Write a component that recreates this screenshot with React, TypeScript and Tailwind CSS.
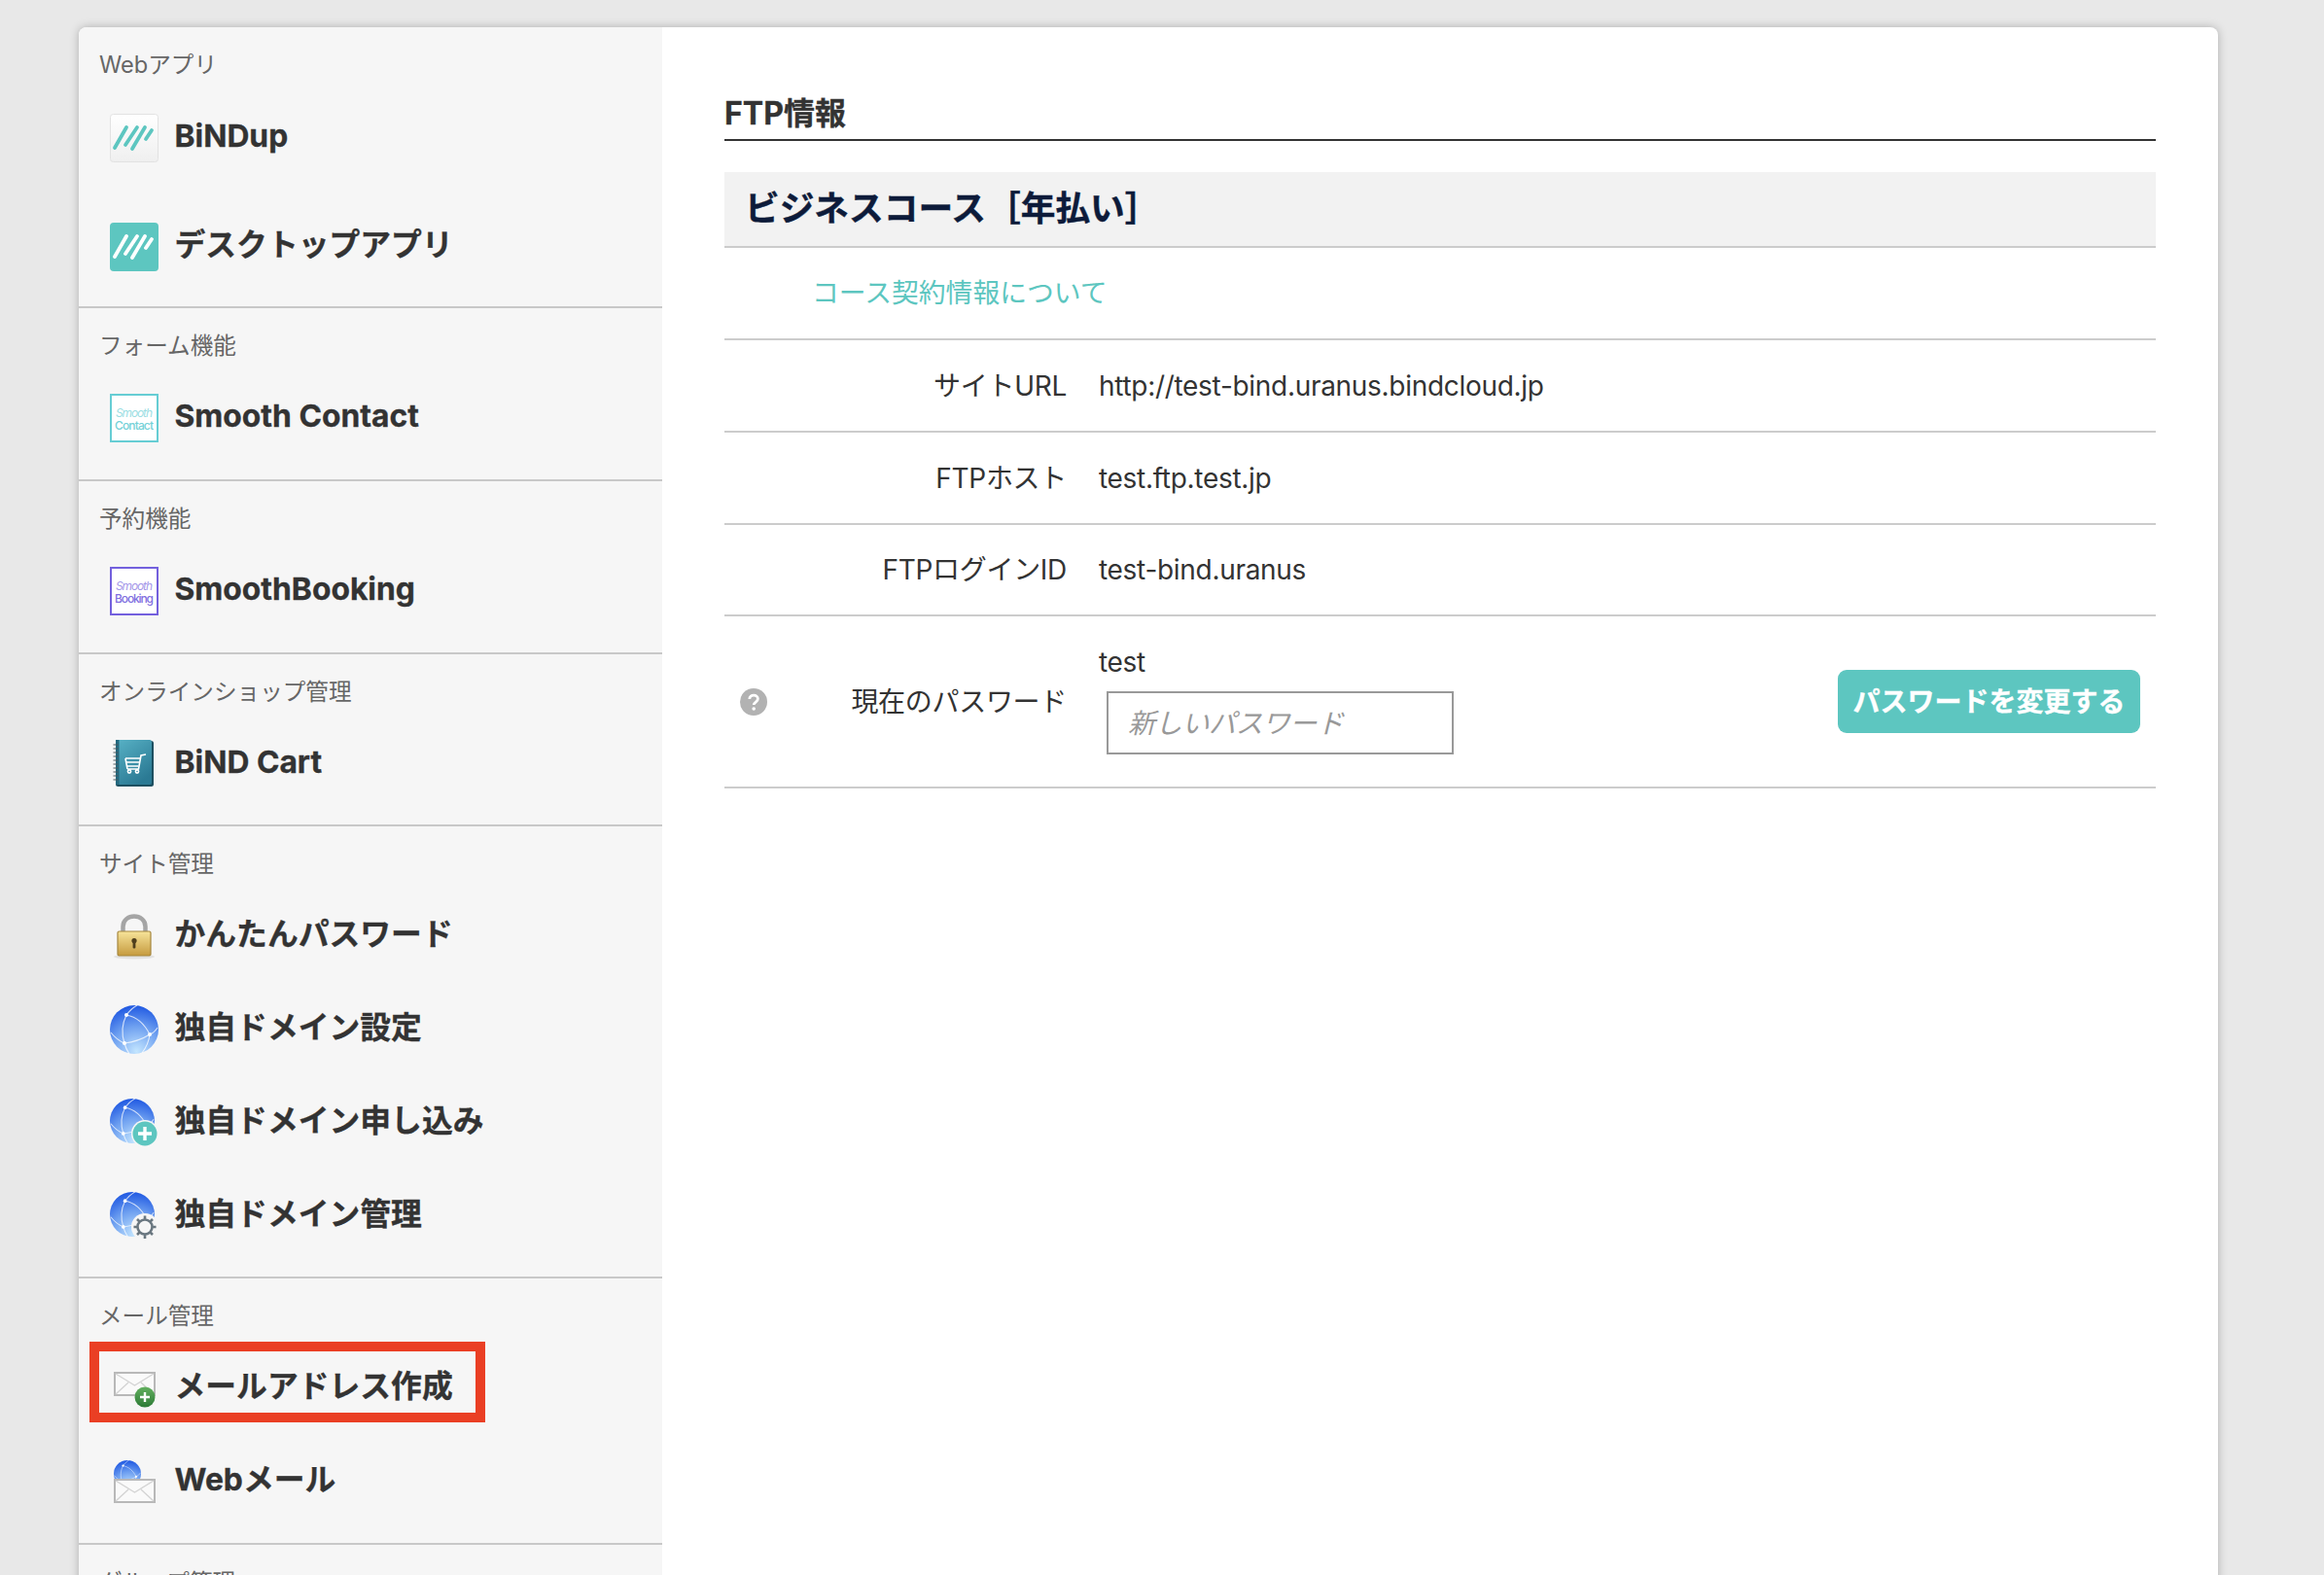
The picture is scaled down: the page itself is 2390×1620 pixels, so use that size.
import type { ReactNode } from "react";

function Stripes({ color }: { color: string }) {
  return (
    <g stroke={color} strokeWidth="3.8" strokeLinecap="round" fill="none">
      <path d="M5 35 L17 14" />
      <path d="M16 32 L28 14" />
      <path d="M23 36 L36 14" />
      <path d="M37 26 L43 17" />
    </g>
  );
}

function BindupIcon() {
  return (
    <svg width="50" height="50" viewBox="0 0 50 50">
      <defs>
        <linearGradient id="bindup-bg" x1="0" y1="0" x2="0" y2="1">
          <stop offset="0" stopColor="#ffffff" />
          <stop offset="1" stopColor="#efefef" />
        </linearGradient>
      </defs>
      <rect x="0.5" y="0.5" width="49" height="49" rx="3" fill="url(#bindup-bg)" stroke="#e2e2e2" />
      <Stripes color="#5dc6c0" />
    </svg>
  );
}

function DesktopIcon() {
  return (
    <svg width="50" height="50" viewBox="0 0 50 50">
      <rect width="50" height="50" rx="4" fill="#5dc6c0" />
      <Stripes color="#ffffff" />
    </svg>
  );
}

function SmoothIcon({ color, top, bottom }: { color: string; top: string; bottom: string }) {
  return (
    <svg width="50" height="50" viewBox="0 0 50 50">
      <rect x="1" y="1" width="48" height="48" fill="#ffffff" stroke={color} strokeWidth="2" />
      <text x="25" y="24" textAnchor="middle" fontSize="12" fontStyle="italic" fontFamily="Inter" fill={color} opacity="0.65" textLength="38">
        {top}
      </text>
      <text x="25" y="37" textAnchor="middle" fontSize="12" fontWeight="500" fontFamily="Inter" fill={color} opacity="0.9" textLength="40">
        {bottom}
      </text>
    </svg>
  );
}

function CartIcon() {
  return (
    <svg width="50" height="50" viewBox="0 0 50 50">
      <defs>
        <linearGradient id="cart-bg" x1="0" y1="0" x2="0.6" y2="1">
          <stop offset="0" stopColor="#58b2c6" />
          <stop offset="1" stopColor="#2b7a94" />
        </linearGradient>
      </defs>
      <rect x="6" y="1" width="39" height="47" rx="2.5" fill="#1d4f60" />
      <rect x="6" y="0" width="37" height="46" rx="2" fill="url(#cart-bg)" />
      <rect x="6" y="0" width="3.5" height="46" fill="#24697f" />
      <path d="M3.5 5h5M3.5 9h5M3.5 13h5M3.5 17h5M3.5 21h5M3.5 25h5M3.5 29h5M3.5 33h5M3.5 37h5M3.5 41h5" stroke="#4a5a60" strokeWidth="1.2" />
      <g stroke="#ffffff" strokeWidth="1.6" fill="none">
        <path d="M37 15 L32 16 L29.5 30 H18" />
        <path d="M16 19 H31 M17 23 H30 M18 27 H29.5" />
        <path d="M16 19 L18 30" />
        <circle cx="20" cy="32.5" r="1.6" />
        <circle cx="28" cy="32.5" r="1.6" />
      </g>
    </svg>
  );
}

function LockIcon() {
  return (
    <svg width="50" height="50" viewBox="0 0 50 50">
      <defs>
        <linearGradient id="lock-body" x1="0" y1="0" x2="0" y2="1">
          <stop offset="0" stopColor="#f7e49a" />
          <stop offset="1" stopColor="#c59a3e" />
        </linearGradient>
      </defs>
      <ellipse cx="25" cy="46" rx="21" ry="2.5" fill="#000000" opacity="0.08" />
      <path d="M13.5 21 V15 C13.5 1 36.5 1 36.5 15 V21" fill="none" stroke="#a5a5a5" strokeWidth="4.5" />
      <rect x="8" y="20" width="34" height="25" rx="1.5" fill="url(#lock-body)" stroke="#a6873f" strokeWidth="1.2" />
      <circle cx="25" cy="29.5" r="2.6" fill="#4f3f1d" />
      <rect x="23.6" y="29.5" width="2.8" height="8" rx="1" fill="#4f3f1d" />
    </svg>
  );
}

function GlobeShape({ id, r = 25, cx = 25, cy = 25 }: { id: string; r?: number; cx?: number; cy?: number }) {
  const k = r / 25;
  return (
    <g transform={`translate(${cx - 25 * k} ${cy - 25 * k}) scale(${k})`}>
      <defs>
        <radialGradient id={id} cx="0.55" cy="0.95" r="0.95">
          <stop offset="0" stopColor="#c4e6ff" />
          <stop offset="0.55" stopColor="#6d9ff0" />
          <stop offset="1" stopColor="#1f58e2" />
        </radialGradient>
      </defs>
      <circle cx="25" cy="25" r="25" fill={`url(#${id})`} />
      <g stroke="#ffffff" strokeOpacity="0.75" strokeWidth="1.1" fill="none">
        <path d="M17 10 C28 12 36 20 41 30" />
        <path d="M17 10 C12 20 12 30 15 39" />
        <path d="M15 39 C24 38 33 35 41 30" />
        <path d="M17 10 C20 6 24 2 28 0" />
        <path d="M41 30 C40 38 37 44 33 49" />
        <path d="M15 39 C10 37 5 33 1 28" />
        <path d="M15 39 C16 43 18 47 20 50" />
        <path d="M41 30 C44 29 47 26 49 23" />
      </g>
      <circle cx="17" cy="10" r="2" fill="#ffffff" />
      <circle cx="41" cy="30" r="2" fill="#ffffff" />
      <circle cx="15" cy="39" r="2" fill="#ffffff" />
    </g>
  );
}

function GlobeIcon() {
  return (
    <svg width="50" height="50" viewBox="0 0 50 50">
      <GlobeShape id="globe-a" />
    </svg>
  );
}

function GlobePlusIcon() {
  return (
    <svg width="50" height="50" viewBox="0 0 50 50">
      <GlobeShape id="globe-b" r={23} cx={23} cy={23} />
      <circle cx="36" cy="36" r="14" fill="#f6f6f6" />
      <circle cx="36" cy="36" r="12.5" fill="#5dc6c0" />
      <path d="M36 29 V43 M29 36 H43" stroke="#ffffff" strokeWidth="3.4" />
    </svg>
  );
}

function GlobeGearIcon() {
  return (
    <svg width="50" height="50" viewBox="0 0 50 50">
      <GlobeShape id="globe-c" r={23} cx={23} cy={23} />
      <circle cx="36" cy="36" r="14" fill="#f6f6f6" />
      <circle cx="36" cy="36" r="7.5" fill="none" stroke="#6a7780" strokeWidth="2.6" />
      <path d="M36 24.5 V29 M36 43 V48 M24.5 36 H29 M43 36 H47.5 M28 28 L31 31 M41 41 L44 44 M44 28 L41 31 M31 41 L28 44" stroke="#6a7780" strokeWidth="2.6" />
    </svg>
  );
}

function Envelope({ y }: { y: number }) {
  return (
    <g>
      <rect x="5" y={y} width="41" height="23" fill="#fafafa" stroke="#b8b8b8" strokeWidth="2" />
      <path d={`M6 ${y + 1} L25.5 ${y + 13} L45 ${y + 1} M6 ${y + 22} L19 ${y + 10} M45 ${y + 22} L32 ${y + 10}`} fill="none" stroke="#d4d4d4" strokeWidth="1.4" />
    </g>
  );
}

function MailAddIcon() {
  return (
    <svg width="50" height="50" viewBox="0 0 50 50">
      <defs>
        <linearGradient id="mail-plus" x1="0" y1="0" x2="0" y2="1">
          <stop offset="0" stopColor="#63b05f" />
          <stop offset="1" stopColor="#2c7a36" />
        </linearGradient>
      </defs>
      <Envelope y={9} />
      <circle cx="36" cy="34" r="10.5" fill="url(#mail-plus)" />
      <path d="M36 29 V39 M31 34 H41" stroke="#ffffff" strokeWidth="2.4" />
    </svg>
  );
}

function WebmailIcon() {
  return (
    <svg width="50" height="50" viewBox="0 0 50 50">
      <GlobeShape id="globe-d" r={14} cx={18} cy={17} />
      <Envelope y={23} />
    </svg>
  );
}

function HelpIcon() {
  return (
    <svg width="28" height="28" viewBox="0 0 28 28">
      <circle cx="14" cy="14" r="14" fill="#b2b2b2" />
      <path d="M9.8 11 C9.8 5.8 18.4 5.8 18.4 10.8 C18.4 14 14.2 14 14.2 17" fill="none" stroke="#ffffff" strokeWidth="2.8" />
      <circle cx="14.2" cy="21" r="1.8" fill="#ffffff" />
    </svg>
  );
}

function MenuRow({ icon, label, className, children }: { icon: ReactNode; label: string; className?: string; children?: ReactNode }) {
  return (
    <div className={`relative flex h-[96px] items-center pl-[32px] ${className ?? ""}`}>
      <div className="h-[50px] w-[50px] shrink-0">{icon}</div>
      <span className="ml-[16.5px] pb-[5px] text-[31.8px] leading-[40px] font-bold text-[#333] [-webkit-text-stroke:0.3px_#333]">{label}</span>
      {children}
    </div>
  );
}

function Section({ title, className, children }: { title: string; className?: string; children: ReactNode }) {
  return (
    <section className={`border-b-2 border-[#c8c8c8] ${className ?? "pb-[15px]"}`}>
      <h3 className="pt-[25px] pl-[21px] text-[23.6px] leading-[28px] font-normal text-[#666]">{title}</h3>
      <div className="mt-[12px]">{children}</div>
    </section>
  );
}

function InfoRow({ label, value, className }: { label: string; value: string; className?: string }) {
  return (
    <div className={`flex items-center border-b-2 border-[#ccc] text-[28px] tracking-[-0.3px] text-[#333] ${className ?? "h-[95px]"}`}>
      <div className="w-[352px] text-right">{label}</div>
      <div className="ml-[33px]">{value}</div>
    </div>
  );
}

export default function App() {
  return (
    <div className="h-[1620px] overflow-hidden bg-[#e8e8e8] pt-[28px] pl-[81px] font-['Inter','Noto_Sans_CJK_JP',sans-serif]">
      <div className="flex h-[1700px] w-[2200px] overflow-hidden rounded-t-lg bg-white shadow-[0_0_10px_rgba(0,0,0,0.25)]">
        <aside className="w-[600px] shrink-0 bg-[#f6f6f6]">
          <section className="border-b-2 border-[#c8c8c8] pb-[13px]">
            <h3 className="pt-[25px] pl-[21px] text-[23.6px] leading-[28px] font-normal text-[#666]">Webアプリ</h3>
            <div className="mt-[13px]">
              <MenuRow icon={<BindupIcon />} label="BiNDup" className="mb-[16px]" />
              <MenuRow icon={<DesktopIcon />} label="デスクトップアプリ" />
            </div>
          </section>
          <Section title="フォーム機能">
            <MenuRow icon={<SmoothIcon color="#66cdd4" top="Smooth" bottom="Contact" />} label="Smooth Contact" />
          </Section>
          <Section title="予約機能">
            <MenuRow icon={<SmoothIcon color="#7360dd" top="Smooth" bottom="Booking" />} label="SmoothBooking" />
          </Section>
          <Section title="オンラインショップ管理" className="pb-[14px]">
            <MenuRow icon={<CartIcon />} label="BiND Cart" />
          </Section>
          <Section title="サイト管理" className="pb-[14px]">
            <MenuRow icon={<LockIcon />} label="かんたんパスワード" />
            <MenuRow icon={<GlobeIcon />} label="独自ドメイン設定" />
            <MenuRow icon={<GlobePlusIcon />} label="独自ドメイン申し込み" />
            <MenuRow icon={<GlobeGearIcon />} label="独自ドメイン管理" />
          </Section>
          <Section title="メール管理">
            <MenuRow icon={<MailAddIcon />} label="メールアドレス作成">
              <div className="absolute top-0 left-[11px] h-[83px] w-[407px] border-[10px] border-[#ea3f24]" />
            </MenuRow>
            <MenuRow icon={<WebmailIcon />} label="Webメール" />
          </Section>
          <Section title="グループ管理">
            <div />
          </Section>
        </aside>

        <main className="flex-1 px-[64px] pt-[70px]">
          <h2 className="border-b-2 border-[#333] pb-[7px] text-[32px] leading-[38px] font-bold text-[#333] [-webkit-text-stroke:0.3px_#333]">FTP情報</h2>
          <div className="mt-[32px] flex h-[78px] items-center border-b-2 border-[#ccc] bg-[#f2f2f2] pl-[21px] text-[35.7px] font-bold text-[#0d1b3a] [-webkit-text-stroke:0.4px_#0d1b3a]">
            ビジネスコース［年払い］
          </div>
          <div className="flex h-[95px] items-center border-b-2 border-[#ccc] pl-[90px] text-[27.8px] text-[#5dc6c0]">
            <a href="#">コース契約情報について</a>
          </div>
          <InfoRow label="サイトURL" value="http://test-bind.uranus.bindcloud.jp" />
          <InfoRow label="FTPホスト" value="test.ftp.test.jp" />
          <InfoRow label="FTPログインID" value="test-bind.uranus" className="h-[94px]" />
          <div className="flex h-[177px] items-center border-b-2 border-[#ccc] text-[28px] tracking-[-0.3px] text-[#333]">
            <div className="flex w-[352px] items-center justify-between pl-[16px]">
              <HelpIcon />
              <span>現在のパスワード</span>
            </div>
            <div className="ml-[33px] flex flex-col self-start pt-[27px]">
              <span className="leading-[40px]">test</span>
              <input
                type="text"
                placeholder="新しいパスワード"
                className="mt-[10px] ml-[8px] h-[65px] w-[357px] border-2 border-[#999] bg-white pl-[20px] text-[28px] italic outline-none placeholder:text-[#999]"
              />
            </div>
            <button className="mr-[16px] ml-auto h-[65px] w-[311px] rounded-[9px] bg-[#5dc6c0] text-[28px] font-bold tracking-normal text-white [-webkit-text-stroke:0.3px_#fff]">
              パスワードを変更する
            </button>
          </div>
        </main>
      </div>
    </div>
  );
}
